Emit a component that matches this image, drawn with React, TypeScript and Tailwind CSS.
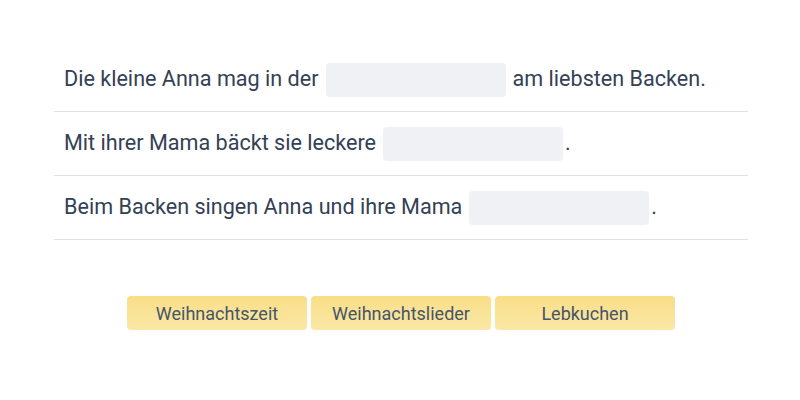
const sentences = [
  { before: "Die kleine Anna mag in der", after: "am liebsten Backen." },
  { before: "Mit ihrer Mama bäckt sie leckere", after: "." },
  { before: "Beim Backen singen Anna und ihre Mama", after: "." },
];

const words = ["Weihnachtszeit", "Weihnachtslieder", "Lebkuchen"];

function Blank({ tight }: { tight: boolean }) {
  return (
    <span
      className={[
        "inline-block w-[180px] h-[34px] rounded bg-[#f0f1f5] ml-[7px]",
        tight ? "mr-[2px]" : "mr-[7px]",
      ].join(" ")}
    />
  );
}

export default function App() {
  return (
    <div className="w-[800px] h-[400px] bg-white font-['Roboto',sans-serif] text-[#334155]">
      <div className="w-[694px] ml-[54px] pt-[48px]">
        {sentences.map((s, i) => (
          <div
            key={i}
            className="flex items-center h-[64px] px-[10px] border-b border-[#e2e2e2] text-[21.6px]"
          >
            <span>{s.before}</span>
            <Blank tight={s.after === "."} />
            <span>{s.after}</span>
          </div>
        ))}
      </div>

      <div className="flex justify-center gap-[4px] mt-[56px] ml-[2px]">
        {words.map((w) => (
          <button
            key={w}
            type="button"
            className="w-[180px] h-[34px] rounded bg-gradient-to-b from-[#f8de87] to-[#fbe8a6] text-[#475569] text-[18px]"
          >
            {w}
          </button>
        ))}
      </div>
    </div>
  );
}
